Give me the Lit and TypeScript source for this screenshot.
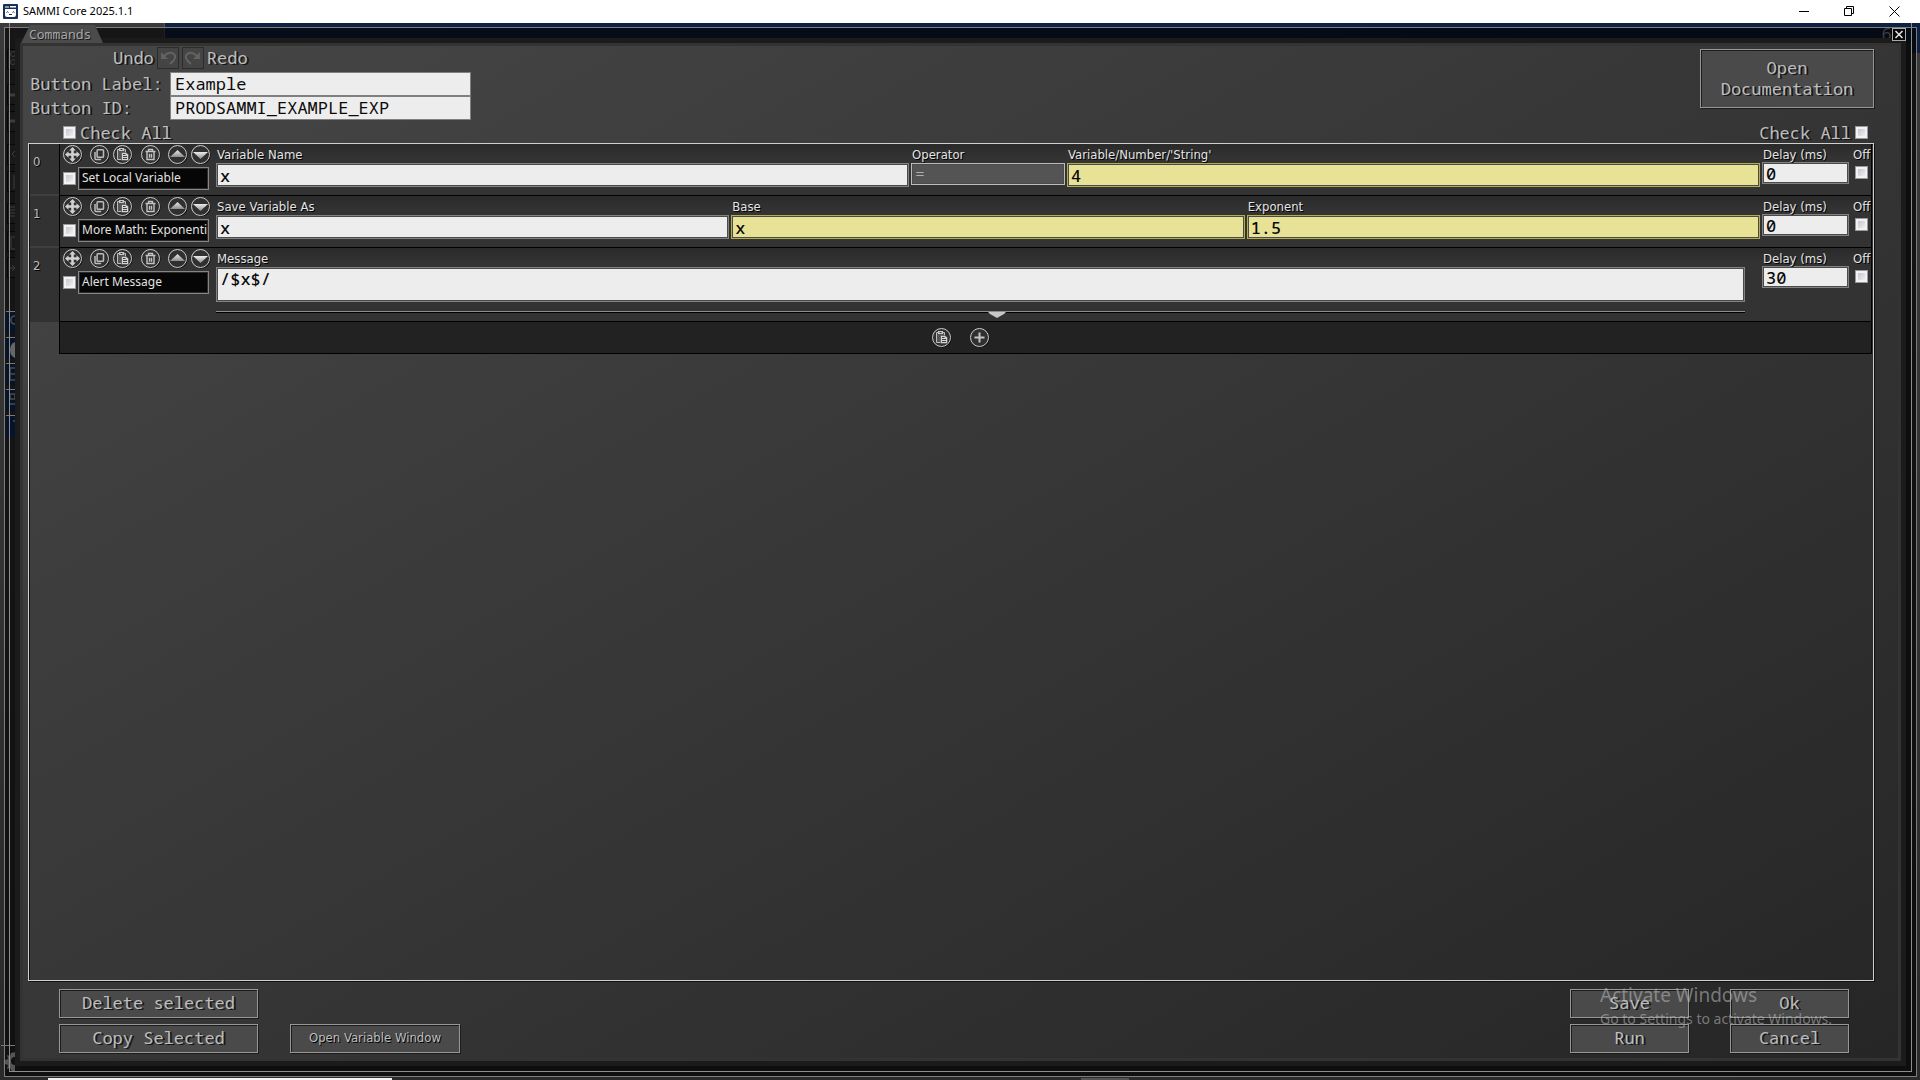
import { LitElement, html, css, svg, nothing, TemplateResult } from "lit";
import { customElement } from "lit/decorators.js";
import { classMap } from "lit/directives/class-map.js";

type Field = { label: string; value: string; kind: "text" | "accent" | "select" | "area" };
type Command = { name: string; fields: Field[]; delay: string };

const COMMANDS: Command[] = [
  {
    name: "Set Local Variable",
    delay: "0",
    fields: [
      { label: "Variable Name", value: "x", kind: "text" },
      { label: "Operator", value: "=", kind: "select" },
      { label: "Variable/Number/'String'", value: "4", kind: "accent" },
    ],
  },
  {
    name: "More Math: Exponenti",
    delay: "0",
    fields: [
      { label: "Save Variable As", value: "x", kind: "text" },
      { label: "Base", value: "x", kind: "accent" },
      { label: "Exponent", value: "1.5", kind: "accent" },
    ],
  },
  {
    name: "Alert Message",
    delay: "30",
    fields: [{ label: "Message", value: "/$x$/", kind: "area" }],
  },
];

const GLYPHS: Record<string, TemplateResult> = {
  move: svg`<path fill="#d0d0d0" d="M9.5 2l3.300 3.500h-2v2.700h2.700v-2l3.500 3.300-3.500 3.300v-2h-2.700v2.700h2l-3.300 3.500-3.300-3.500h2v-2.700H5.500v2L2 9.500l3.500-3.300v2h2.700V5.500h-2z"/>`,
  copy: svg`<path fill="none" stroke="#bcbcbc" stroke-width="1.5" d="M8 4.700h4.600q.9 0 .9.9v5.800q0 .9-.9.9H8q-.9 0-.9-.9V5.600q0-.9.9-.9z"/><path fill="none" stroke="#bcbcbc" stroke-width="1.500" d="M5 7v6.600q0 .9.9.9h5.300"/>`,
  paste: svg`<path fill="#555" stroke="#bcbcbc" d="M4.500 4.500h8v10h-8z"/><path fill="#c8c8c8" d="M6 3h5v3H6z"/><path fill="#333" d="M7.500 4h2v1h-2z"/><path fill="#d4d4d4" stroke="#444" stroke-width=".6" d="M8.500 7.500h4.500l2.500 2v6h-7z"/><path stroke="#444" d="M10 9.500h2.500M10 11.500h4M10 13.500h4"/>`,
  trash: svg`<path fill="none" stroke="#c4c4c4" stroke-width="1.400" d="M4.500 6.500h10M7.500 6V4.500h4V6M6 7v7.500h7V7M8.500 8.800v4M10.500 8.800v4"/>`,
  up: svg`<path fill="url(#g)" d="M9.500 5l7.500 7H2z"/>`,
  down: svg`<path fill="url(#g)" d="M9.500 14L17 7H2z"/>`,
  plus: svg`<path stroke="#c4c4c4" stroke-width="2" d="M9.500 4.500v10M4.500 9.500h10"/>`,
};

const roundIcon = (name: string, label: string) => html`
  <button class="round" aria-label=${label}>
    <svg width="20" height="20" viewBox="0 0 20 20">
      <defs>
        <linearGradient id="g" x1="0" y1="0" x2="0" y2="1">
          <stop offset="0" stop-color=${name === "down" ? "#8c8c8c" : "#ececec"} />
          <stop offset="1" stop-color=${name === "down" ? "#ececec" : "#8c8c8c"} />
        </linearGradient>
      </defs>
      <circle cx="10.500" cy="10.500" r="9" fill="#0a0a0a" />
      <circle cx="9.500" cy="9.500" r="9" fill="#303030" stroke="#cccccc" />
      ${GLYPHS[name]}
    </svg>
  </button>
`;

@customElement("app-root")
export class AppRoot extends LitElement {
  static styles = css`
    :host {
      --mono: "Noto Sans Mono", "DejaVu Sans Mono", monospace;
      --sans: "DejaVu Sans Condensed", "DejaVu Sans", sans-serif;
      display: flex;
      flex-direction: column;
      min-height: 100vh;
      background: #1a1a1a;
      color: #bdbdbd;
      font: 13px/16px var(--sans);
    }
    * { box-sizing: border-box; }
    button, input, select, textarea {
      margin: 0;
      padding: 0;
      border: 0;
      border-radius: 0;
      background: none;
      color: inherit;
      font: inherit;
      appearance: none;
      outline: none;
    }
    svg { display: block; }

    .titlebar {
      display: flex;
      align-items: center;
      height: 23px;
      padding: 0 3px 1px 3px;
      background: #fff;
      color: #000;
      font: 11px/22px "Noto Sans", "Open Sans", sans-serif;
    }
    .titlebar .name { flex: 1; margin-left: 5px; }
    .titlebar button { display: grid; place-items: center; width: 45px; height: 22px; }

    .stage { position: relative; flex: 1; display: flex; padding: 20px 19px 19px 20px; overflow: hidden; }
    .backdrop { position: absolute; inset: 0; background: linear-gradient(#3a3a3a, #333 50%, #2a2a2a); }
    .sky { position: absolute; left: 164px; right: 0; top: 0; height: 30px; background: #0f2142; border-left: 1px solid #555; }
    .line { position: absolute; border: 1px solid #7d7d7d; }
    .outer { inset: 4px 3px 3px 4px; background: linear-gradient(90deg, rgba(0, 0, 0, .62), rgba(0, 0, 0, .68)); }
    .inner { inset: -2px 8px 8px 9px; border-color: #8d8d8d; }
    .strip { position: absolute; left: 0; top: 0; }
    .gear { position: absolute; left: 0; bottom: 0; }
    .counter { position: absolute; top: 2px; right: 18px; color: #3d3d3d; font: 17px/18px var(--mono); }
    .taskbar { position: absolute; left: 48px; width: 344px; bottom: 0; height: 2px; background: #f2f2f2; }
    .taskmark { position: absolute; left: 1081px; width: 48px; bottom: 0; height: 2px; background: #555; }

    .dialog {
      position: relative;
      flex: 1;
      display: flex;
      flex-direction: column;
      padding: 1px 24px 5px 5px;
      border: 3px solid #333;
      background: linear-gradient(150deg, #464646, #262626) padding-box;
      box-shadow: 0 0 0 5px #1b1b1b, 5px 5px 0 5px #0e0e0e;
    }
    .tab {
      position: absolute;
      left: -2px;
      top: -21px;
      width: 82px;
      height: 18px;
      margin: 0;
      padding-left: 8px;
      background: #4b4b4b;
      clip-path: polygon(9px 0, 74px 0, 100% 100%, 0 100%);
      color: #a6a6a6;
      font: 13px/18px var(--mono);
      text-shadow: 1px 1px #1a1a1a;
    }
    .close {
      position: absolute;
      right: -8px;
      top: -18px;
      width: 14px;
      height: 13px;
      border: 1px solid #a8a8a8;
      background: #050505;
    }

    .mono { font: 17px/20px var(--mono); text-shadow: 2px 1px #161616; white-space: pre; }
    header { display: flex; justify-content: space-between; align-items: flex-start; padding-left: 2px; }
    .history { display: flex; align-items: center; gap: 3px; padding-left: 83px; }
    .history button { width: 22px; height: 22px; border: 1px solid #2c2c2c; }
    .ident { display: grid; grid-template-columns: 140px 301px; align-items: center; margin-top: 3px; }
    .ident input {
      height: 24px;
      padding: 0 4px 2px;
      border: 1px solid #808080;
      background: #ededed;
      color: #0a0a0a;
      font: 17px/20px var(--mono);
    }
    .push {
      padding-bottom: 2px;
      border: 1px solid #979797;
      background: #4a4a4a;
      box-shadow: inset 1px 1px #1c1c1c, 1px 1px #1c1c1c;
      text-align: center;
    }
    .docs { width: 174px; height: 59px; margin-top: 2px; line-height: 21px; }
    .checkrow { display: flex; justify-content: space-between; height: 21px; margin-top: 2px; padding: 0 6px 0 35px; }
    .checkrow label { display: flex; align-items: center; gap: 4px; }
    input[type="checkbox"] {
      flex: none;
      width: 13px;
      height: 13px;
      border: 1px solid #9a9a9a;
      background: linear-gradient(135deg, #b8bcc6, #fafafa);
      box-shadow: inset 0 0 0 2px #f2f2f2;
    }

    .list { flex: 1; border: 1px solid #cfcfcf; box-shadow: inset 1px 1px #111, 1px 1px #111; padding: 0 1px; }
    .command { display: flex; }
    .index {
      width: 29px;
      padding: 10px 0 0 3px;
      background: #323232;
      border-bottom: 2px solid #3f3f3f;
      text-shadow: 1px 1px #000;
    }
    .command:last-of-type .index { border-bottom: 0; }
    .body {
      flex: 1;
      min-width: 0;
      display: flex;
      min-height: 52px;
      padding: 1px 0 0 2px;
      border: solid #000;
      border-width: 0 1px 1px;
      background: linear-gradient(#2a2a2a, #333 14px);
    }
    .tools { width: 148px; margin-right: 6px; }
    .icons { display: flex; justify-content: space-between; margin: 0 -1px 0 1px; }
    .pair { display: flex; gap: 3px; }
    .round { width: 20px; height: 20px; }
    .title { display: flex; align-items: center; gap: 2px; margin: 2px 0 0 1px; }
    .title button {
      flex: 1;
      height: 23px;
      margin-right: 1px;
      padding: 0 0 2px 3px;
      overflow: hidden;
      border: 1px solid #868686;
      background: #060606;
      box-shadow: inset 0 0 0 1px #2c2c2c;
      color: #e2e2e2;
      font: 12px/18px "Noto Sans", "Open Sans", sans-serif;
      text-align: left;
      white-space: nowrap;
    }
    .fields { flex: 1; min-width: 0; display: flex; gap: 2px; margin-right: 2px; }
    .field { flex: 1; min-width: 0; display: flex; flex-direction: column; }
    .field.select { flex: 0 0 154px; }
    .field.area { padding-right: 15px; }
    .caption { height: 17px; padding: 2px 0 0 1px; color: #e4e4e4; text-shadow: 1px 1px #000; white-space: nowrap; }
    .field .caption { height: 18px; }
    .box {
      display: block;
      width: 100%;
      height: 24px;
      padding: 0 3px;
      border: 1px solid #828282;
      background: #ededed;
      box-shadow: inset 0 0 0 1px #4a4a4a;
      color: #0a0a0a;
      font: 500 17px/20px var(--mono);
    }
    .accent .box { border-color: #b3ad52; background: #e8e296; }
    .select .box { height: 22px; border-color: #bcbcbc; background: #545454; color: #b0b0b0; font: 13px/18px var(--sans); }
    .area .box { height: 35px; padding-top: 1px; resize: none; overflow: hidden; }
    .grip {
      display: flex;
      justify-content: center;
      height: 10px;
      margin-top: 9px;
      padding-left: 32px;
      border-top: 1px solid #8d8d8d;
      box-shadow: inset 0 1px #000;
    }
    .delay { width: 87px; margin-right: 4px; }
    .delay .box { height: 22px; }
    .off { width: 18px; }
    .off .caption { padding-left: 0; }
    .off input { display: block; margin: 4px 0 0 2px; }
    .adder {
      display: flex;
      justify-content: center;
      align-items: center;
      gap: 18px;
      height: 32px;
      margin-left: 29px;
      padding-right: 9px;
      border: solid #000;
      border-width: 0 1px 1px;
      background: #222;
    }

    footer { display: flex; justify-content: space-between; align-items: flex-end; padding: 8px 25px 0 31px; }
    .group { display: grid; gap: 6px 32px; }
    .left { grid-template-columns: 199px 170px; }
    .right { grid-template-columns: 119px 119px; column-gap: 41px; }
    .group button { height: 29px; }
    .left button:nth-child(1) { grid-column: 1; }
    .left button:nth-child(2) { grid-row: 2; }
    .left button:nth-child(3) { grid-row: 2; text-shadow: 1px 1px #000; }

    .watermark {
      position: absolute;
      right: 84px;
      bottom: 51px;
      width: 236px;
      color: rgba(190, 190, 190, .55);
      font: 14px/21px "Noto Sans", "Open Sans", sans-serif;
      white-space: nowrap;
      pointer-events: none;
    }
    .watermark strong { display: block; font-size: 19px; font-weight: 400; line-height: 25px; }
  `;

  private backdrop() {
    const dim = [26, 61, 88, 121, 148, 180, 208, 234];
    const blue = [288, 314, 340, 366, 392];
    return html`
      <div class="backdrop" aria-hidden="true">
        <div class="sky"></div>
        <div class="line outer"></div>
        <svg class="strip" width="15" height="420" viewBox="0 0 15 420">
          ${dim.map((y) => svg`<path fill="#191919" stroke="#070707" d="M7.500 ${y}.500h9v20h-9z"/>`)}
          <g fill="none" stroke="#3d3d3d">
            <circle cx="13" cy="31" r="2.500" /><circle cx="13" cy="39" r="2.500" />
            <path stroke-width="3" d="M10 72h5M10 98h5" />
            <path d="M15 128l-3 3 3 3M14 152v14M10 184h5M10 187h5M10 190h5M10 193h5M15 214h-4v12h4M10 245h5M12 242l3 3-3 3" />
          </g>
          ${blue.map((y) => svg`<path fill="#06142b" d="M6 ${y}h9v22H6z"/><path fill="#777" d="M6 ${y}h9v1H6z"/>`)}
          <path fill="#666" d="M15 319v16q-5-2-5-8t5-8z" />
          <path fill="none" stroke="#4c4c4c" stroke-width="1.500" d="M15 293q-4 0-4 4t4 4M10 345h5M10 351h5M10 357h5M10 345v12M10 371h5v5h-5zM10 381h5M13 398h2" />
        </svg>
        <svg class="gear" width="15" height="40" viewBox="0 0 15 40">
          <path fill="#777" d="M1 5h14v1H1z" />
          <path fill="#555" d="M15 12l-4 1-1 3-3-1 1 4-3 1v4l3 1-1 4 3-1 2 4 3 0v-7q-4 0-4-4t4-4z" />
        </svg>
        <div class="line inner"></div>
        <span class="counter">60</span>
        <div class="taskbar"></div>
        <div class="taskmark"></div>
      </div>
    `;
  }

  private field(f: Field) {
    const control =
      f.kind === "select"
        ? html`<select class="box"><option>${f.value}</option></select>`
        : f.kind === "area"
          ? html`<textarea class="box" .value=${f.value}></textarea>`
          : html`<input class="box" .value=${f.value} />`;
    return html`
      <div class=${classMap({ field: true, [f.kind]: true })}>
        <label><div class="caption">${f.label}</div>${control}</label>
        ${f.kind === "area"
          ? html`<div class="grip"><svg width="18" height="6" viewBox="0 0 18 6"><path fill="#c8c8c8" d="M0 0h18l-2 2-7 4-7-4z" /></svg></div>`
          : nothing}
      </div>
    `;
  }

  private command(c: Command, i: number) {
    return html`
      <section class="command">
        <div class="index">${i}</div>
        <div class="body">
          <div class="tools">
            <div class="icons">
              ${roundIcon("move", "Move")}
              <div class="pair">${roundIcon("copy", "Copy")}${roundIcon("paste", "Paste")}</div>
              ${roundIcon("trash", "Delete")}
              <div class="pair">${roundIcon("up", "Move up")}${roundIcon("down", "Move down")}</div>
            </div>
            <div class="title">
              <input type="checkbox" aria-label="Select command" />
              <button>${c.name}</button>
            </div>
          </div>
          <div class="fields">${c.fields.map((f) => this.field(f))}</div>
          <label class="delay"><div class="caption">Delay (ms)</div><input class="box" .value=${c.delay} /></label>
          <label class="off"><div class="caption">Off</div><input type="checkbox" /></label>
        </div>
      </section>
    `;
  }

  render() {
    return html`
      <div class="titlebar">
        <svg width="15" height="15" viewBox="0 0 15 15">
          <rect width="15" height="15" rx="1" fill="#17305c" />
          <path fill="#fff" d="M2 2.500h4v1H2zM7 2h6v1.500H7zM2 5h11v6q0 2-2 2H4q-2 0-2-2z" />
          <path fill="none" stroke="#17305c" d="M3.500 8.500q1-1.500 2 0M9.500 8.500q1-1.500 2 0M6 10.500h3" />
        </svg>
        <span class="name">SAMMI Core 2025.1.1</span>
        <button aria-label="Minimize"><svg width="11" height="11" viewBox="0 0 11 11"><path stroke="#000" d="M0 5.500h10" /></svg></button>
        <button aria-label="Restore"><svg width="11" height="11" viewBox="0 0 11 11"><path fill="none" stroke="#000" d="M.5 2.500h7v7h-7zM2.500 2.500v-2h7v7h-2" /></svg></button>
        <button aria-label="Close window"><svg width="11" height="11" viewBox="0 0 11 11"><path stroke="#000" d="M.5.500l10 10M10.500.500l-10 10" /></svg></button>
      </div>
      <div class="stage">
        ${this.backdrop()}
        <main class="dialog">
          <h1 class="tab">Commands</h1>
          <button class="close" aria-label="Close">
            <svg width="12" height="11" viewBox="0 0 12 11"><path stroke="#e6e6e6" stroke-width="1.500" d="M2.500 2l7 7M9.500 2l-7 7" /></svg>
          </button>
          <header>
            <div>
              <div class="history">
                <span class="mono">Undo</span>
                <button aria-label="Undo"><svg width="20" height="20" viewBox="0 0 20 20"><path fill="none" stroke="#626262" stroke-width="2" d="M6 8q4-4 8-3 4 2 3 5t-5 6" /><path fill="#626262" d="M3 4v7h7z" /></svg></button>
                <button aria-label="Redo"><svg width="20" height="20" viewBox="0 0 20 20"><path fill="none" stroke="#626262" stroke-width="2" d="M14 8q-4-4-8-3-4 2-3 5t5 6" /><path fill="#626262" d="M17 4v7h-7z" /></svg></button>
                <span class="mono">Redo</span>
              </div>
              <div class="ident">
                <label class="mono" for="label">Button Label:</label>
                <input id="label" .value=${"Example"} />
                <label class="mono" for="id">Button ID:</label>
                <input id="id" .value=${"PRODSAMMI_EXAMPLE_EXP"} />
              </div>
            </div>
            <button class="push mono docs">Open<br />Documentation</button>
          </header>
          <div class="checkrow">
            <label class="mono"><input type="checkbox" />Check All</label>
            <label class="mono">Check All<input type="checkbox" /></label>
          </div>
          <div class="list">
            ${COMMANDS.map((c, i) => this.command(c, i))}
            <div class="adder">${roundIcon("paste", "Paste command")}${roundIcon("plus", "Add command")}</div>
          </div>
          <footer>
            <div class="group left">
              <button class="push mono">Delete selected</button>
              <button class="push mono">Copy Selected</button>
              <button class="push">Open Variable Window</button>
            </div>
            <div class="group right">
              <button class="push mono">Save</button>
              <button class="push mono">Ok</button>
              <button class="push mono">Run</button>
              <button class="push mono">Cancel</button>
            </div>
          </footer>
        </main>
        <div class="watermark"><strong>Activate Windows</strong>Go to Settings to activate Windows.</div>
      </div>
    `;
  }
}
